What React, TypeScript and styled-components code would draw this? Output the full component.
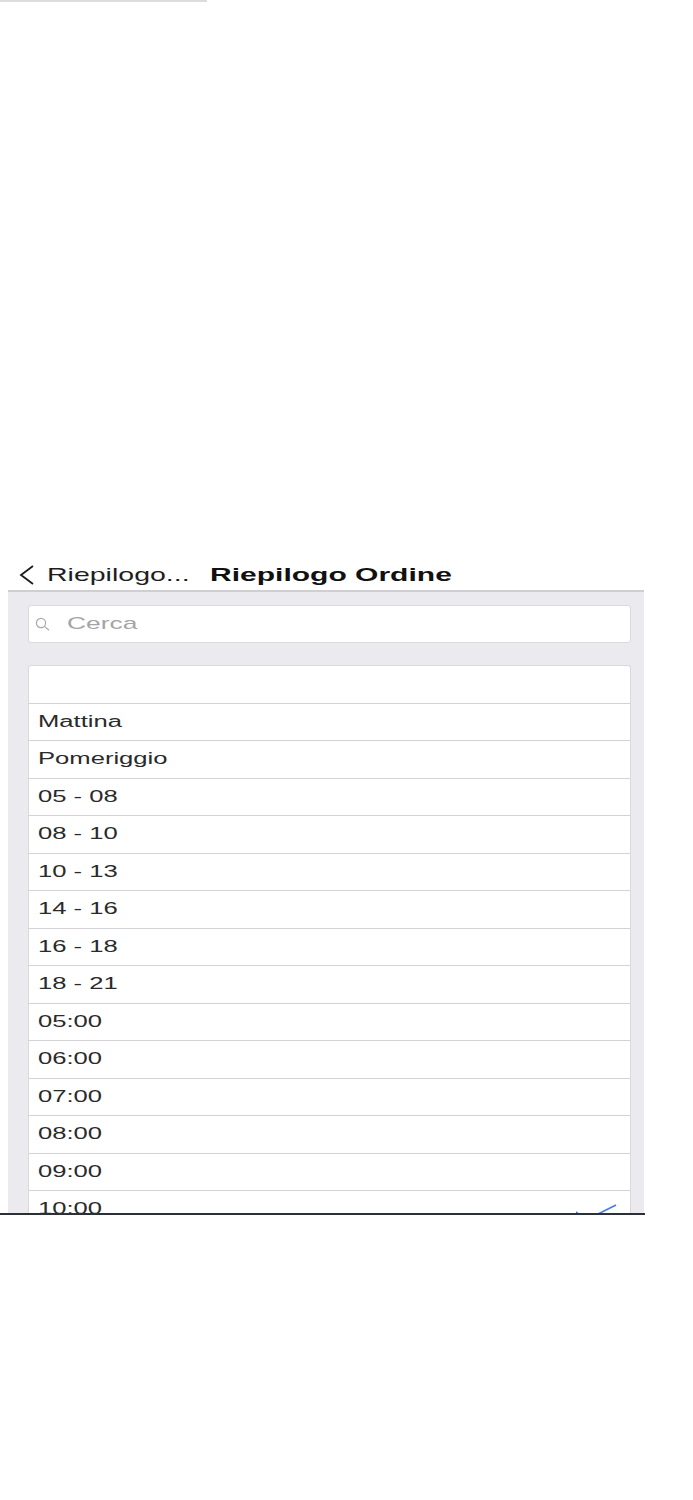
import React from "react";
import styled, { createGlobalStyle } from "styled-components";

const slots = [
  "",
  "Mattina",
  "Pomeriggio",
  "05 - 08",
  "08 - 10",
  "10 - 13",
  "14 - 16",
  "16 - 18",
  "18 - 21",
  "05:00",
  "06:00",
  "07:00",
  "08:00",
  "09:00",
  "10:00",
];

const selected = "10:00";

const App: React.FC = (): React.ReactElement => {
  return (
    <Page>
      <GlobalStyle />
      <TopRule />
      <NavBar>
        <BackButton>
          <svg width="16" height="20" viewBox="0 0 16 20">
            <polyline points="14,1 2,10 14,19" fill="none" stroke="#1c1c1c" strokeWidth="1.8" />
          </svg>
          <BackLabel>
            <Stretch $scale={1.5}>Riepilogo...</Stretch>
          </BackLabel>
        </BackButton>
        <Title>
          <Stretch $scale={1.58}>Riepilogo Ordine</Stretch>
        </Title>
      </NavBar>
      <Panel>
        <SearchField>
          <svg width="15" height="15" viewBox="0 0 15 15">
            <circle cx="6" cy="6" r="4.6" fill="none" stroke="#a9a9ad" strokeWidth="1.2" />
            <line x1="9.4" y1="9.4" x2="14" y2="13.2" stroke="#a9a9ad" strokeWidth="1.2" />
          </svg>
          <Placeholder>
            <Stretch $scale={1.55}>Cerca</Stretch>
          </Placeholder>
        </SearchField>
        <List>
          {slots.map((label, i) => (
            <Row key={i}>
              <Stretch $scale={1.6}>{label}</Stretch>
              {label === selected && (
                <Check width="41" height="17" viewBox="0 0 41 17">
                  <polyline points="0,8 10,16 40,1" fill="none" stroke="#4a7fd8" strokeWidth="1.7" />
                </Check>
              )}
            </Row>
          ))}
        </List>
      </Panel>
      <BottomRule />
    </Page>
  );
};

const GlobalStyle = createGlobalStyle`
  body {
    margin: 0;
    background: #ffffff;
    font-family: "Liberation Sans", Arial, sans-serif;
  }
`;

const Page = styled.div`
  display: flex;
  flex-direction: column;
  width: 693px;
  min-height: 1500px;
  background: #ffffff;
`;

const TopRule = styled.div`
  width: 207px;
  height: 2px;
  background: #dcdcdc;
`;

const NavBar = styled.div`
  display: flex;
  align-items: center;
  height: 30px;
  margin-top: 558px;
  padding-left: 19px;
`;

const BackButton = styled.div`
  display: flex;
  align-items: center;
  gap: 12px;
`;

const BackLabel = styled.div`
  width: 163px;
  font-size: 19px;
  color: #1e1e1e;
`;

const Title = styled.div`
  font-size: 19px;
  font-weight: 700;
  color: #111111;
`;

const Stretch = styled.span<{ $scale: number }>`
  display: inline-block;
  white-space: nowrap;
  transform: scaleX(${(p) => p.$scale});
  transform-origin: left center;
`;

const Panel = styled.div`
  display: flex;
  flex-direction: column;
  box-sizing: border-box;
  width: 636px;
  height: 623px;
  margin-left: 8px;
  padding: 13px 13px 0 20px;
  background: #eaeaef;
  border-top: 2px solid #cfcfd3;
  overflow: hidden;
`;

const SearchField = styled.div`
  display: flex;
  align-items: center;
  box-sizing: border-box;
  height: 38px;
  padding-left: 6px;
  gap: 17px;
  background: #ffffff;
  border: 1px solid #dadade;
  border-radius: 3px;
  flex-shrink: 0;
`;

const Placeholder = styled.div`
  font-size: 17px;
  color: #a4a4a8;
`;

const List = styled.div`
  display: flex;
  flex-direction: column;
  margin-top: 22px;
  background: #ffffff;
  border: 1px solid #d9d9dd;
  border-bottom: none;
  border-radius: 3px 3px 0 0;
  flex-shrink: 0;
`;

const Row = styled.div`
  display: flex;
  align-items: center;
  box-sizing: border-box;
  height: 37.5px;
  padding: 0 13px 0 9px;
  border-bottom: 1px solid #d3d3d7;
  font-size: 16px;
  color: #2a2a2a;
  flex-shrink: 0;
`;

const Check = styled.svg`
  margin-left: auto;
  align-self: flex-start;
  margin-top: 13px;
`;

const BottomRule = styled.div`
  width: 645px;
  height: 2px;
  background: #2b3037;
`;

export default App;
